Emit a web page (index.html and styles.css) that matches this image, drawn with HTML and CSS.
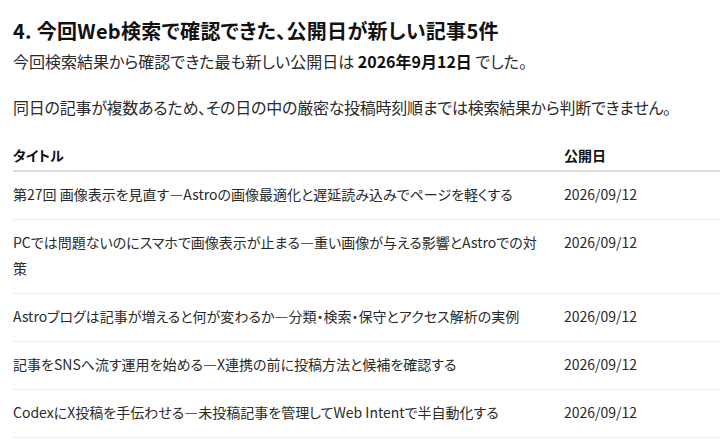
FILE: index.html
```html
<!DOCTYPE html>
<html lang="ja">
<head>
<meta charset="utf-8">
<link rel="stylesheet" href="styles.css">
</head>
<body>
<main class="page">
  <h2 class="title">4. 今回Web検索で確認できた、公開日が新しい記事5件</h2>
  <p class="lead">今回検索結果から確認できた最も新しい公開日は <strong>2026年9月12日</strong> でした。</p>
  <p class="note">同日の記事が複数あるため、その日の中の厳密な投稿時刻順までは検索結果から判断できません。</p>
  <table class="articles">
    <thead>
      <tr><th class="col-title">タイトル</th><th class="col-date">公開日</th></tr>
    </thead>
    <tbody>
      <tr><td>第27回 画像表示を見直す<span class="dash">—</span>Astroの画像最適化と遅延読み込みでページを軽くする</td><td>2026/09/12</td></tr>
      <tr><td>PCでは問題ないのにスマホで画像表示が止まる<span class="dash">—</span>重い画像が与える影響とAstroでの対策</td><td>2026/09/12</td></tr>
      <tr><td>Astroブログは記事が増えると何が変わるか<span class="dash">—</span>分類・検索・保守とアクセス解析の実例</td><td>2026/09/12</td></tr>
      <tr><td>記事をSNSへ流す運用を始める<span class="dash">—</span>X連携の前に投稿方法と候補を確認する</td><td>2026/09/12</td></tr>
      <tr><td>CodexにX投稿を手伝わせる<span class="dash">—</span>未投稿記事を管理してWeb Intentで半自動化する</td><td>2026/09/12</td></tr>
    </tbody>
  </table>
</main>
</body>
</html>
```

FILE: styles.css
```css
html, body {
  margin: 0;
  padding: 0;
  background: #ffffff;
}

body {
  font-family: "Noto Sans CJK JP", "Noto Sans", sans-serif;
  font-feature-settings: "palt";
  color: #2a2a2a;
  overflow: hidden;
}

.page {
  padding: 17px 0 0 13px;
}

.title {
  margin: 0;
  font-size: 20px;
  line-height: 28px;
  font-weight: 700;
  color: #111;
  letter-spacing: 0.3px;
}

.lead {
  margin: 2px 0 0;
  font-size: 16px;
  line-height: 28px;
}

.lead strong {
  font-weight: 700;
  color: #111;
}

.note {
  margin: 18px 0 0;
  font-size: 16px;
  line-height: 28px;
  letter-spacing: -0.25px;
}

.articles {
  margin-top: 11px;
  width: 100%;
  border-collapse: collapse;
  font-size: 14px;
  line-height: 26px;
}

.articles th {
  text-align: left;
  font-weight: 700;
  color: #111;
  padding: 10px 0 2px;
  border-bottom: 2px solid #dedede;
}

.col-title {
  width: 551px;
}

.articles td {
  padding: 9px 0 12px;
  border-bottom: 1px solid #ececec;
  vertical-align: top;
}

.articles td:first-child {
  padding-right: 20px;
}

.dash {
  font-weight: 700;
  font-feature-settings: normal;
  color: #333;
}
```
